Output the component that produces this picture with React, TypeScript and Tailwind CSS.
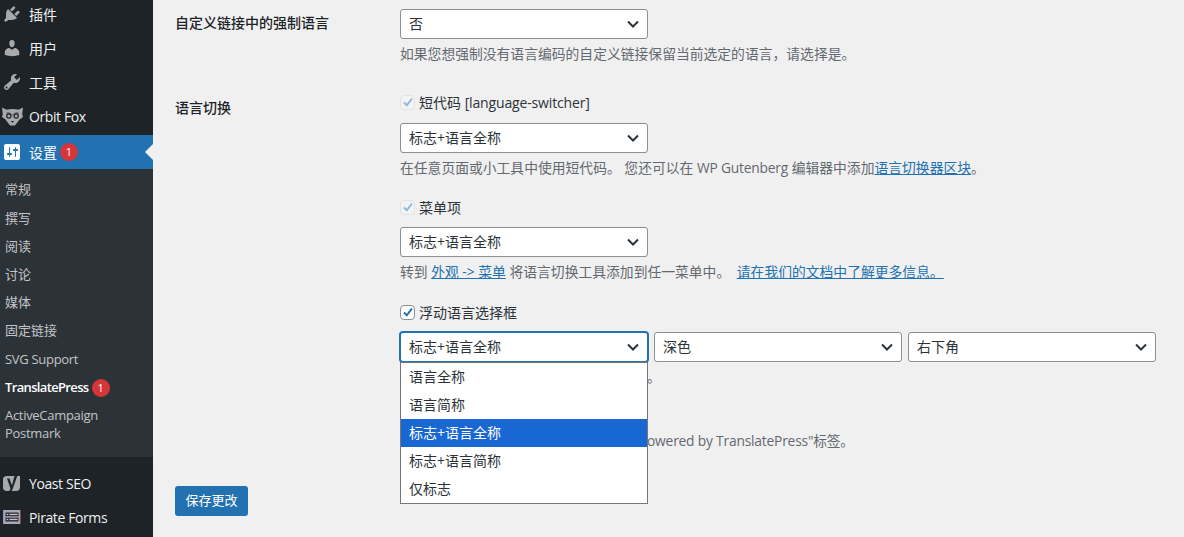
import { ReactNode } from "react";

const font = "font-['Open_Sans','Noto_Sans_CJK_SC',sans-serif]";

const Dash = ({ d, color = "#a7aaad" }: { d: string; color?: string }) => (
  <svg width="20" height="20" viewBox="0 0 20 20" fill={color}>
    <path d={d} />
  </svg>
);

const plugPath =
  "M13.11 4.36L9.87 7.6 8 5.73l3.24-3.24c.35-.34 1.05-.2 1.56.32.52.51.66 1.21.31 1.55zm-8 1.77l.91-1.12 9.01 9.01-1.19.84c-.71.71-2.63 1.16-3.82 1.16H6.14L4.9 17.26c-.59.59-1.54.59-2.12 0-.59-.58-.59-1.53 0-2.12l1.24-1.24v-3.88c0-1.13.4-3.19 1.09-3.89zm7.26 3.97l3.24-3.24c.34-.35 1.04-.21 1.55.31.52.51.66 1.21.31 1.55l-3.24 3.25z";
const userPath =
  "M10 9.25c-2.27 0-2.73-3.44-2.73-3.44C7 4.02 7.82 2 9.97 2c2.16 0 2.98 2.02 2.71 3.81 0 0-.41 3.44-2.68 3.44zm0 2.57L12.72 10c2.39 0 4.52 2.33 4.52 4.53v2.49s-3.65 1.13-7.24 1.13c-3.65 0-7.24-1.13-7.24-1.13v-2.49c0-2.25 1.94-4.48 4.47-4.48z";
const toolsPath =
  "M16.68 9.77c-1.34 1.34-3.3 1.67-4.95.99l-5.41 6.52c-.99.99-2.59.99-3.58 0s-.99-2.59 0-3.57l6.52-5.42c-.68-1.65-.35-3.61.99-4.95 1.28-1.28 3.12-1.62 4.72-1.06l-2.89 2.89 2.82 2.82 2.86-2.87c.53 1.58.18 3.39-1.08 4.67zM3.81 16.21c.4.39 1.04.39 1.43 0 .4-.4.4-1.04 0-1.43-.39-.4-1.03-.4-1.43 0-.39.39-.39 1.03 0 1.43z";
const settingsPath =
  "M18 16V4c0-1.100-.9-2-2-2H4c-1.100 0-2 .9-2 2v12c0 1.100.9 2 2 2h12c1.100 0 2-.9 2-2zM8 11h1c.55 0 1 .45 1 1s-.45 1-1 1H8v1.500c0 .28-.22.5-.5.5s-.5-.22-.5-.5V13H6c-.55 0-1-.45-1-1s.45-1 1-1h1V5.500c0-.28.22-.5.5-.5s.5.22.5.5V11zm5-2h-1c-.55 0-1-.45-1-1s.45-1 1-1h1V5.500c0-.28.22-.5.5-.5s.5.22.5.5V7h1c.55 0 1 .45 1 1s-.45 1-1 1h-1v5.500c0 .28-.22.5-.5.5s-.5-.22-.5-.5V9z";

const FoxIcon = () => (
  <svg width="21" height="19" viewBox="0 0 21 19">
    <path d="M0 .5l4.500 2.300c3.500-1 8.500-1 12 0L21 .5l-.8 6.500 .8 3-3.500 2.500L13 18.500h-5l-4.500-6L0 10l.8-3z" fill="#a7aaad" />
    <path d="M4 5.500c2-1 4-.5 5 1l1.500 1 1.500-1c1-1.500 3-2 5-1l-1 2-5.500 1-5.500-1z" fill="#6e7275" />
    <circle cx="6.800" cy="9" r="2.700" fill="#1d2327" />
    <circle cx="14.200" cy="9" r="2.700" fill="#1d2327" />
    <circle cx="6.800" cy="9" r="1.500" fill="#a7aaad" />
    <circle cx="14.200" cy="9" r="1.500" fill="#a7aaad" />
    <path d="M9 14h3l-1.500 2z" fill="#1d2327" />
  </svg>
);

const YoastIcon = () => (
  <svg width="18" height="23" viewBox="0 0 18 23">
    <path d="M3.500 4H17v11c0 2.500-1.500 4-4 4H3.500C1.500 19 0 17.500 0 15.500v-8C0 5.500 1.500 4 3.500 4z" fill="#a7aaad" />
    <path d="M12.500 0.500h3L9.800 16.500c-1 3-2.500 5-5.800 5.500v-2c1.800-.3 3-1.500 3.500-3.500L4 6.500h2.500l2.400 7z" fill="#1d2327" />
  </svg>
);

const FormsIcon = () => (
  <svg width="18" height="14" viewBox="0 0 18 14">
    <rect width="18" height="14" fill="#a9a8b2" />
    <rect x="0" width="1" height="14" fill="#8f96c4" />
    <rect x="17" width="1" height="14" fill="#7d4050" />
    <rect x="2.500" y="2.500" width="13" height="9" fill="#2a2b36" />
    <rect x="2.500" y="6.300" width="13" height="1.400" fill="#a9a8b2" />
    <rect x="6.500" y="3.800" width="8" height="1.300" fill="#c4c4cc" />
    <rect x="6.500" y="8.800" width="8" height="1.300" fill="#c4c4cc" />
    <rect x="3.700" y="3.800" width="1.600" height="1.300" fill="#c4c4cc" />
    <rect x="3.700" y="8.800" width="1.600" height="1.300" fill="#c4c4cc" />
  </svg>
);

const Chevron = () => (
  <svg width="12" height="8" viewBox="0 0 12 8" fill="none" stroke="#2c3338" strokeWidth="2">
    <path d="M1 1.500l5 5 5-5" />
  </svg>
);

const Badge = () => (
  <span className="ml-[3px] flex h-[18px] w-[18px] items-center justify-center rounded-full bg-[#d63638] text-[11px] font-normal text-white">1</span>
);

const MenuItem = ({ icon, label, latin }: { icon: ReactNode; label: string; latin?: boolean }) => (
  <div className="flex h-[34px] items-center text-[14px] text-[#f0f0f1]">
    <div className="flex w-[29px] shrink-0 items-center justify-center pr-[5px]">{icon}</div>
    <span className={latin ? "tracking-[-0.4px]" : ""}>{label}</span>
  </div>
);

const Select = ({ value, focused }: { value: string; focused?: boolean }) => (
  <div
    className={`flex h-[30px] w-[248px] items-center justify-between rounded-[3px] border bg-white pl-[8px] pr-[8px] text-[14px] text-[#2c3338] ${
      focused ? "border-[#2271b1] shadow-[0_0_0_1px_#2271b1]" : "border-[#8c8f94]"
    }`}
  >
    <span className="pb-[2px]">{value}</span>
    <Chevron />
  </div>
);

const Checkbox = ({ label, disabled }: { label: ReactNode; disabled?: boolean }) => (
  <div className="flex h-[20px] items-center gap-[4px] text-[14px] text-[#2c3338]">
    <div
      className={`flex h-[15px] w-[15px] items-center justify-center rounded-[4px] border ${
        disabled ? "border-[#e2e3e5] bg-[#f3f3f4]" : "border-[#8c8f94] bg-white"
      }`}
    >
      <svg width="12" height="12" viewBox="0 0 12 12" fill="none" stroke={disabled ? "#8fb8de" : "#2271b1"} strokeWidth="2">
        <path d="M2 6.500l2.800 2.800L10 2.500" />
      </svg>
    </div>
    <span>{label}</span>
  </div>
);

const Desc = ({ children }: { children: ReactNode }) => (
  <p className="h-[20px] whitespace-nowrap text-[13.8px] leading-[20px] text-[#646970]">{children}</p>
);

const options = ["语言全称", "语言简称", "标志+语言全称", "标志+语言简称", "仅标志"];

export default function App() {
  return (
    <div className={`flex h-[537px] w-[1184px] overflow-hidden bg-[#f0f0f1] ${font}`}>
      {/* sidebar */}
      <aside className="flex w-[153px] shrink-0 flex-col bg-[#1d2327]">
        <div className="-mt-[3px]">
          <MenuItem icon={<Dash d={plugPath} />} label="插件" />
          <MenuItem icon={<Dash d={userPath} />} label="用户" />
          <MenuItem icon={<Dash d={toolsPath} />} label="工具" />
          <MenuItem icon={<FoxIcon />} label="Orbit Fox" latin />
        </div>
        <div className="relative mt-[2px] flex h-[34px] items-center bg-[#2271b1] text-[14px] text-white">
          <div className="flex w-[29px] shrink-0 items-center justify-center pr-[5px]"><Dash d={settingsPath} color="#fff" /></div>
          <span>设置</span>
          <Badge />
          <div className="absolute right-0 top-[9px] h-0 w-0 border-y-[8px] border-r-[8px] border-y-transparent border-r-[#f0f0f1]" />
        </div>
        <div className="flex h-[288px] flex-col bg-[#2c3338] pt-[7px] text-[13px] text-[#c3c4c7]">
          {["常规", "撰写", "阅读", "讨论", "媒体", "固定链接"].map((s) => (
            <div key={s} className="flex h-[28.200px] items-center pl-[5px]">{s}</div>
          ))}
          <div className="mt-[1px] flex h-[28px] items-center pl-[5px] tracking-[-0.3px]">SVG Support</div>
          <div className="flex h-[28px] items-center pl-[5px] font-semibold text-white">
            <span className="tracking-[-0.65px]">TranslatePress</span>
            <Badge />
          </div>
          <div className="mt-[5px] flex h-[18px] items-center pl-[5px] tracking-[-0.3px]">ActiveCampaign</div>
          <div className="flex h-[18px] items-center pl-[5px] tracking-[-0.3px]">Postmark</div>
        </div>
        <div className="mt-[9px]">
          <MenuItem icon={<YoastIcon />} label="Yoast SEO" latin />
          <MenuItem icon={<FormsIcon />} label="Pirate Forms" latin />
        </div>
      </aside>

      {/* settings form */}
      <main className="flex min-w-0 flex-1 flex-col pl-[22px] pt-[9px]">
        <div className="flex">
          <div className="w-[225px] shrink-0 pt-[4px] text-[14px] font-medium leading-[20px] text-[#1d2327]">自定义链接中的强制语言</div>
          <div className="flex flex-col gap-[5px]">
            <Select value="否" />
            <Desc>如果您想强制没有语言编码的自定义链接保留当前选定的语言，请选择是。</Desc>
          </div>
        </div>

        <div className="mt-[29px] flex">
          <div className="w-[225px] shrink-0 pt-[5px] text-[14px] font-medium leading-[20px] text-[#1d2327]">语言切换</div>
          <div className="flex flex-col">
            <div className="-mt-[1px]">
              <Checkbox label={<>短代码 <span className="tracking-[-0.15px]">[language-switcher]</span></>} disabled />
            </div>
            <div className="mt-[11px]"><Select value="标志+语言全称" /></div>
            <div className="mt-[5px]">
              <Desc>
                在任意页面或小工具中使用短代码。 您还可以在 <span className="tracking-[-0.2px]">WP Gutenberg</span> 编辑器中添加<a className="text-[#2271b1] underline">语言切换器区块</a>。
              </Desc>
            </div>

            <div className="mt-[19px]"><Checkbox label="菜单项" disabled /></div>
            <div className="mt-[10px]"><Select value="标志+语言全称" /></div>
            <div className="mt-[5px]">
              <Desc>
                转到 <a className="text-[#2271b1] underline">外观 -&gt; 菜单</a> 将语言切换工具添加到任一菜单中。 <a className="ml-[3px] text-[#2271b1] underline">请在我们的文档中了解更多信息。</a>
              </Desc>
            </div>

            <div className="mt-[20px]"><Checkbox label="浮动语言选择框" /></div>
            <div className="relative mt-[10px]">
              <div className="flex gap-[6px]">
                <Select value="标志+语言全称" focused />
                <Select value="深色" />
                <Select value="右下角" />
              </div>
              {/* open dropdown */}
              <div className="absolute left-0 top-[30px] z-10 w-[248px] border border-[#767676] bg-white text-[14px] text-[#2c3338]">
                {options.map((o, i) => (
                  <div key={o} className={`flex h-[28px] items-center pb-[2px] pl-[8px] ${i === 2 ? "bg-[#1967d2] text-white" : ""}`}>{o}</div>
                ))}
              </div>
            </div>
            <div className="mt-[5px]">
              <Desc>
                <span className="pl-[247px]">。</span>
              </Desc>
            </div>
            <div className="mt-[44px]">
              <Desc>
                <span className="pl-[247px] tracking-[-0.2px]">owered by TranslatePress"标签。</span>
              </Desc>
            </div>
          </div>
        </div>

        <button className="mt-[35px] h-[30px] w-[73px] rounded-[3px] bg-[#2271b1] text-[13px] text-white">保存更改</button>
      </main>
    </div>
  );
}
